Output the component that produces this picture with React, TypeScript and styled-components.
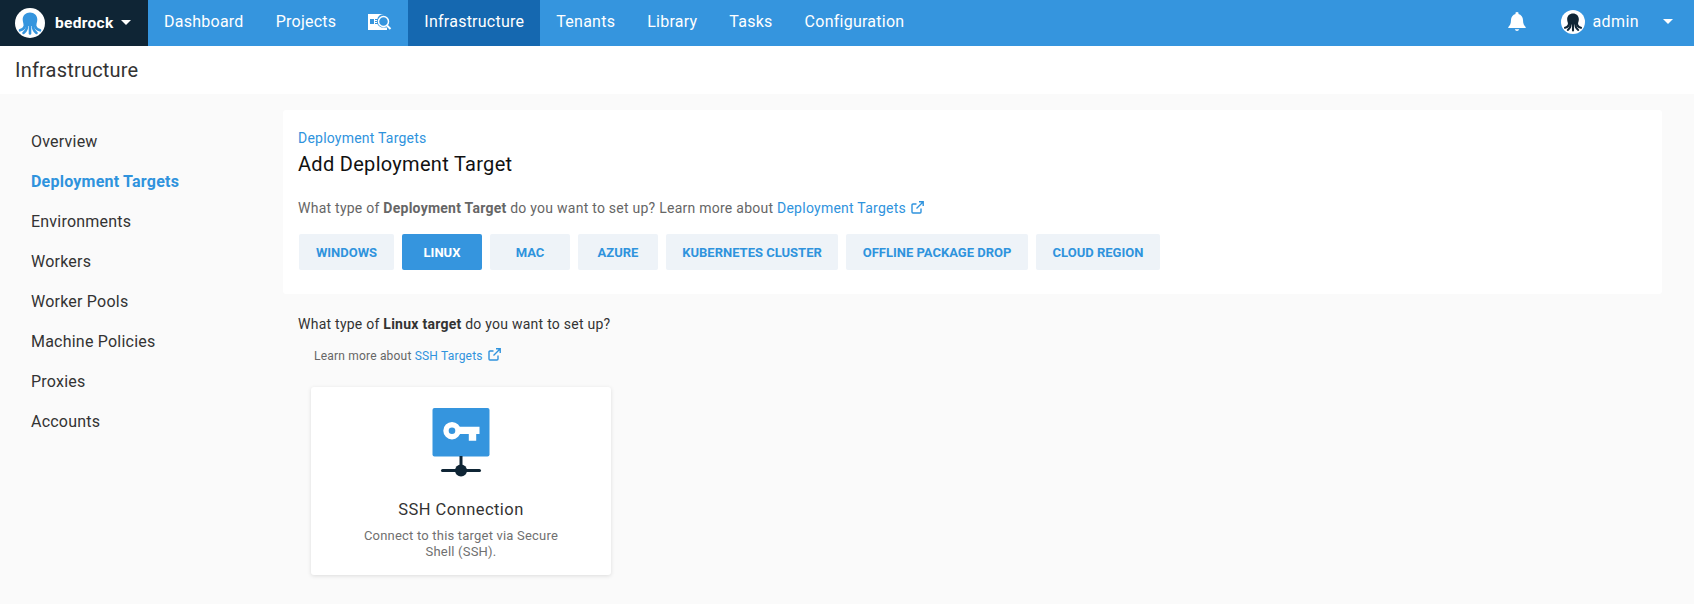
import styled, { createGlobalStyle } from "styled-components";

const GlobalStyle = createGlobalStyle`
  html, body {
    margin: 0;
    padding: 0;
    background: #fafafa;
    font-family: Roboto, "Liberation Sans", sans-serif;
    color: #333333;
  }
`;

const Page = styled.div`
  width: 1694px;
  height: 604px;
  overflow: hidden;
`;

const NavBar = styled.nav`
  display: flex;
  align-items: stretch;
  height: 46px;
  background: #3595de;
  color: #fff;
`;

const Brand = styled.div`
  display: flex;
  align-items: center;
  width: 148px;
  box-sizing: border-box;
  padding: 0 0 1px 15px;
  background: #0f2535;
  font-size: 15.5px;
  font-weight: 700;
`;

const BrandName = styled.span`
  margin-left: 10px;
  letter-spacing: 0.3px;
`;

const Caret = styled.span<{ $left: number }>`
  width: 0;
  height: 0;
  margin-left: ${(p) => p.$left}px;
  border-left: 5px solid transparent;
  border-right: 5px solid transparent;
  border-top: 5px solid #fff;
`;

const NavItem = styled.a<{ $active?: boolean }>`
  display: flex;
  align-items: center;
  padding: 0 16px 3px;
  font-size: 16px;
  letter-spacing: 0.25px;
  background: ${(p) => (p.$active ? "#1568b0" : "transparent")};
`;

const NavRight = styled.div`
  display: flex;
  align-items: center;
  margin-left: auto;
  padding: 0 21px 3px 0;
`;

const UserName = styled.span`
  margin-left: 8px;
  font-size: 16px;
  letter-spacing: 0.4px;
`;

const Bell = styled.svg`
  width: 18px;
  height: 20px;
  margin-right: 35px;
  fill: #fff;
`;

const TitleBar = styled.header`
  display: flex;
  align-items: center;
  height: 48px;
  padding-left: 15px;
  background: #fff;
  font-size: 20px;
  letter-spacing: 0.2px;
`;

const Body = styled.div`
  display: flex;
  padding-top: 16px;
`;

const SideNav = styled.aside`
  display: flex;
  flex-direction: column;
  width: 283px;
  box-sizing: border-box;
  padding: 12px 0 0 31px;
`;

const SideLink = styled.a<{ $active?: boolean }>`
  height: 40px;
  line-height: 40px;
  font-size: 16px;
  letter-spacing: 0.22px;
  font-weight: ${(p) => (p.$active ? 700 : 400)};
  color: ${(p) => (p.$active ? "#2f93dd" : "#333333")};
`;

const Main = styled.main`
  width: 1379px;
`;

const Panel = styled.section`
  height: 184px;
  box-sizing: border-box;
  padding: 19px 16px 0 15px;
  background: #fff;
  border-radius: 3px;
`;

const Crumb = styled.a`
  display: block;
  font-size: 14px;
  line-height: 18px;
  letter-spacing: 0.22px;
  color: #2f93dd;
`;

const Heading = styled.h1`
  margin: 4px 0 0;
  font-size: 20px;
  font-weight: 400;
  line-height: 26px;
  letter-spacing: 0.3px;
  color: #111111;
`;

const Question = styled.p`
  margin: 22px 0 0;
  font-size: 14px;
  line-height: 18px;
  letter-spacing: 0.25px;
  color: #666666;
`;

const TabRow = styled.div`
  display: flex;
  gap: 8px;
  margin: 17px 0 0 1px;
`;

const TypeTab = styled.button<{ $active?: boolean; $width: number }>`
  width: ${(p) => p.$width}px;
  height: 36px;
  padding: 0;
  border: 0;
  border-radius: 2px;
  font-family: inherit;
  font-size: 13px;
  font-weight: 700;
  text-transform: uppercase;
  background: ${(p) => (p.$active ? "#3595de" : "#eef3f8")};
  color: ${(p) => (p.$active ? "#fff" : "#2f93dd")};
`;

const Section = styled.div`
  padding: 21px 15px 0;
`;

const SubQuestion = styled.p`
  margin: 0;
  font-size: 14px;
  line-height: 18px;
  letter-spacing: 0.25px;
  color: #333333;
`;

const LearnMore = styled.p`
  margin: 15px 0 0 16px;
  font-size: 12px;
  line-height: 16px;
  letter-spacing: 0.2px;
  color: #666666;
`;

const Link = styled.a`
  color: #2f93dd;
`;

const External = styled.svg`
  width: 13px;
  height: 13px;
  margin-left: 5px;
  vertical-align: -1px;
  fill: none;
  stroke: #2f93dd;
  stroke-width: 1.4;
`;

const TargetCard = styled.article`
  display: flex;
  flex-direction: column;
  align-items: center;
  width: 300px;
  height: 188px;
  box-sizing: border-box;
  margin: 23px 0 0 13px;
  padding-top: 21px;
  background: #fff;
  border-radius: 3px;
  box-shadow: 0 1px 4px rgba(0, 0, 0, 0.12);
`;

const CardTitle = styled.h2`
  margin: 19px 0 0;
  font-size: 16.5px;
  font-weight: 400;
  line-height: 22px;
  letter-spacing: 0.45px;
  color: #333333;
`;

const CardText = styled.p`
  width: 210px;
  margin: 7px 0 0;
  font-size: 13px;
  line-height: 16px;
  text-align: center;
  letter-spacing: 0.2px;
  color: #707070;
`;

const sideLinks = [
  "Overview",
  "Deployment Targets",
  "Environments",
  "Workers",
  "Worker Pools",
  "Machine Policies",
  "Proxies",
  "Accounts",
];

const targetTabs = [
  { label: "Windows", width: 95 },
  { label: "Linux", width: 80 },
  { label: "Mac", width: 80 },
  { label: "Azure", width: 80 },
  { label: "Kubernetes Cluster", width: 172 },
  { label: "Offline Package Drop", width: 182 },
  { label: "Cloud Region", width: 124 },
];

function Octopus({ size, bodyColor }: { size: number; bodyColor: string }) {
  return (
    <svg width={size} height={size} viewBox="0 0 30 30">
      <circle cx="15" cy="15" r="15" fill="#fff" />
      <path
        fill={bodyColor}
        d="M15 4.500c-4.300 0-7.300 3-7.300 7 0 2.600 1 4.300 1.500 6.500h11.600c.5-2.200 1.500-3.900 1.500-6.500 0-4-3-7-7.300-7z"
      />
      <g fill="none" stroke={bodyColor} strokeWidth="2.600" strokeLinecap="round">
        <path d="M10 16c.2 3.500-2 5.500-5 6.300" />
        <path d="M12 17c.2 4-1.500 6.500-3.500 8" />
        <path d="M15 17v8.500" />
        <path d="M18 17c-.2 4 1.500 6.500 3.500 8" />
        <path d="M20 16c-.2 3.500 2 5.500 5 6.300" />
      </g>
    </svg>
  );
}

function SearchCardIcon() {
  return (
    <svg width="24" height="18" viewBox="0 0 24 18">
      <path fill="#fff" d="M0 1h15.500a7 7 0 0 0-2 13.500H19V17H0z" />
      <rect x="2" y="6" width="4" height="5" fill="#3595de" />
      <path stroke="#3595de" strokeWidth="1.2" d="M7 6.500h4M7 8.500h3M7 10.500h4" />
      <circle cx="15.500" cy="8.500" r="5" fill="none" stroke="#fff" strokeWidth="1.500" />
      <path stroke="#fff" strokeWidth="2" d="M19 12.500l3.500 3.500" />
    </svg>
  );
}

function ExternalIcon() {
  return (
    <External viewBox="0 0 13 13">
      <path d="M10 7.500V11a1 1 0 0 1-1 1H2a1 1 0 0 1-1-1V4a1 1 0 0 1 1-1h3.500" />
      <path d="M5.500 7.500L12 1M8 .8h4.200V5" />
    </External>
  );
}

function SshIcon() {
  return (
    <svg width="60" height="72" viewBox="0 0 60 72">
      <rect x="1.500" y="0" width="57" height="48.500" rx="2" fill="#3595de" />
      {/* key */}
      <circle cx="21" cy="22.700" r="6" fill="none" stroke="#fff" strokeWidth="5.400" />
      <path fill="#fff" d="M27 18.700h21.500V26h-3.300v6.700h-7.400V26H27z" />
      {/* network stem */}
      <rect x="28.500" y="48" width="3" height="14" fill="#0f2535" />
      <rect x="10" y="61" width="40" height="3" rx="1.500" fill="#0f2535" />
      <circle cx="30" cy="62.500" r="6" fill="#0f2535" />
    </svg>
  );
}

export default function App() {
  return (
    <Page>
      <GlobalStyle />
      <NavBar>
        <Brand>
          <Octopus size={30} bodyColor="#3595de" />
          <BrandName>bedrock</BrandName>
          <Caret $left={8} />
        </Brand>
        <NavItem>Dashboard</NavItem>
        <NavItem>Projects</NavItem>
        <NavItem>
          <SearchCardIcon />
        </NavItem>
        <NavItem $active>Infrastructure</NavItem>
        <NavItem>Tenants</NavItem>
        <NavItem>Library</NavItem>
        <NavItem>Tasks</NavItem>
        <NavItem>Configuration</NavItem>
        <NavRight>
          <Bell viewBox="0 0 18 20">
            <path d="M9 0a1.500 1.500 0 0 0-1.400 2C4.800 2.700 3 5 3 8c0 4-1.200 5.500-2.600 7-.4.500-.1 1 .5 1h16.200c.6 0 .9-.5.500-1C16.200 13.500 15 12 15 8c0-3-1.800-5.300-4.600-6A1.500 1.500 0 0 0 9 0zM6.800 17.300a2.300 2.300 0 0 0 4.400 0z" />
          </Bell>
          <Octopus size={24} bodyColor="#0f2535" />
          <UserName>admin</UserName>
          <Caret $left={24} />
        </NavRight>
      </NavBar>
      <TitleBar>Infrastructure</TitleBar>
      <Body>
        <SideNav>
          {sideLinks.map((link) => (
            <SideLink key={link} $active={link === "Deployment Targets"}>
              {link}
            </SideLink>
          ))}
        </SideNav>
        <Main>
          <Panel>
            <Crumb>Deployment Targets</Crumb>
            <Heading>Add Deployment Target</Heading>
            <Question>
              What type of <b>Deployment Target</b> do you want to set up? Learn
              more about <Link>Deployment Targets</Link>
              <ExternalIcon />
            </Question>
            <TabRow>
              {targetTabs.map((tab) => (
                <TypeTab
                  key={tab.label}
                  $width={tab.width}
                  $active={tab.label === "Linux"}
                >
                  {tab.label}
                </TypeTab>
              ))}
            </TabRow>
          </Panel>
          <Section>
            <SubQuestion>
              What type of <b>Linux target</b> do you want to set up?
            </SubQuestion>
            <LearnMore>
              Learn more about <Link>SSH Targets</Link>
              <ExternalIcon />
            </LearnMore>
            <TargetCard>
              <SshIcon />
              <CardTitle>SSH Connection</CardTitle>
              <CardText>Connect to this target via Secure Shell (SSH).</CardText>
            </TargetCard>
          </Section>
        </Main>
      </Body>
    </Page>
  );
}
